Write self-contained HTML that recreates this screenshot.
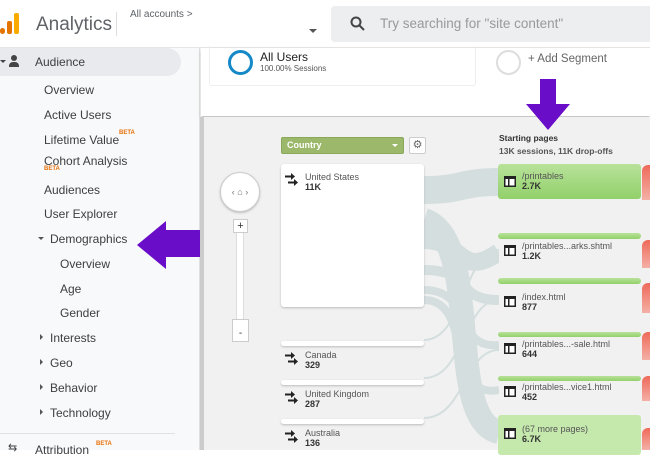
<!DOCTYPE html>
<html><head><meta charset="utf-8"><style>
*{margin:0;padding:0;box-sizing:border-box}
body{width:650px;height:450px;overflow:hidden;font-family:"Liberation Sans",Arial,sans-serif;background:#fff;position:relative}
.a{position:absolute}
.side{left:0;top:48px;width:200px;height:402px;background:#f8f9fa;border-right:1px solid #e0e0e0}
.si{position:absolute;font-size:12px;color:#3c4043;white-space:nowrap}
.beta{position:absolute;font-size:6px;color:#e8710a;font-weight:bold}
.flow{left:201px;top:117px;width:449px;height:333px;background:#f1f1f1}
.cb{position:absolute;left:281px;width:143px;background:#fff;border-radius:3px;box-shadow:0 1px 2px #bbb}
.ct{position:absolute;font-size:9px;color:#555;white-space:nowrap}
.ct b{display:block;color:#333;font-size:9px}
.gn{position:absolute;left:498px;width:143px;background:linear-gradient(#b8e29a,#92d06a);border-radius:3px}
.rd{position:absolute;left:642px;width:10px;background:linear-gradient(#ee6a5a,#f4b0a6);border-radius:6px 0 0 0}
</style></head><body>
<svg width="0" height="0" style="position:absolute"><defs>
<symbol id="pg" viewBox="0 0 12 11"><rect x="0" y="0" width="12" height="11" fill="#222"/><rect x="1.5" y="3" width="2.5" height="6.5" fill="#fff"/><rect x="5.5" y="3" width="5" height="6.5" fill="#fff"/><rect x="1.5" y="3" width="9" height="0.01" fill="#fff"/></symbol>
<symbol id="ar" viewBox="0 0 14 14"><path d="M0 3.5H6V1L10 4.5L6 8V5.5H0Z" fill="#222"/><path d="M3 9.5H9V7L13 10.5L9 14V11.5H3Z" fill="#222"/></symbol>
</defs></svg>
<!-- header -->
<div class="a" style="left:0;top:0;width:650px;height:48px;background:#fff;border-bottom:1px solid #e6e6e6;box-shadow:0 1px 2px #eee"></div>
<div class="a" style="left:0;top:28px;width:5px;height:6px;background:#e37400;border-radius:3px"></div>
<div class="a" style="left:7px;top:21px;width:5px;height:13px;background:#e37400;border-radius:2px"></div>
<div class="a" style="left:14px;top:13px;width:5px;height:21px;background:#f9ab00;border-radius:2px"></div>
<div class="a" style="left:36px;top:14px;font-size:19px;color:#5f6368">Analytics</div>
<div class="a" style="left:116px;top:12px;width:1px;height:24px;background:#ddd"></div>
<div class="a" style="left:130px;top:9px;font-size:10px;color:#5f6368">All accounts &gt;</div>
<div class="a" style="left:309px;top:29px;border-left:4px solid transparent;border-right:4px solid transparent;border-top:4px solid #555"></div>
<div class="a" style="left:331px;top:6px;width:325px;height:36px;background:#eceef0;border-radius:4px"></div>
<svg class="a" style="left:350px;top:16px" width="16" height="16"><circle cx="6" cy="6" r="4.5" fill="none" stroke="#444" stroke-width="2"/><path d="M9.5 9.5L14 14" stroke="#444" stroke-width="2"/></svg>
<div class="a" style="left:380px;top:16px;font-size:13.5px;color:#999">Try searching for "site content"</div>
<!-- sidebar -->
<div class="a side"></div>
<div class="a" style="left:0;top:48px;width:181px;height:28px;background:#e8eaed;border-radius:0 14px 14px 0"></div>
<div class="a" style="left:0;top:60px;border-left:3px solid transparent;border-right:3px solid transparent;border-top:3px solid #444"></div>
<div class="a" style="left:11px;top:55px;width:6px;height:6px;background:#444;border-radius:50%"></div>
<div class="a" style="left:9px;top:62px;width:10px;height:5px;background:#444;border-radius:4px 4px 0 0"></div>
<div class="si" style="left:35px;top:55px">Audience</div>
<div class="si" style="left:44px;top:83px">Overview</div>
<div class="si" style="left:44px;top:108px">Active Users</div>
<div class="si" style="left:44px;top:133px">Lifetime Value</div><div class="beta" style="left:119px;top:130px">BETA</div>
<div class="si" style="left:44px;top:154px">Cohort Analysis</div><div class="beta" style="left:44px;top:166px">BETA</div>
<div class="si" style="left:44px;top:183px">Audiences</div>
<div class="si" style="left:44px;top:207px">User Explorer</div>
<div class="a" style="left:38px;top:237px;border-left:3px solid transparent;border-right:3px solid transparent;border-top:3px solid #555"></div>
<div class="si" style="left:50px;top:232px">Demographics</div>
<div class="si" style="left:60px;top:257px">Overview</div>
<div class="si" style="left:60px;top:282px">Age</div>
<div class="si" style="left:60px;top:306px">Gender</div>
<div class="a" style="left:40px;top:334px;border-top:3px solid transparent;border-bottom:3px solid transparent;border-left:3px solid #555"></div><div class="si" style="left:50px;top:331px">Interests</div>
<div class="a" style="left:40px;top:359px;border-top:3px solid transparent;border-bottom:3px solid transparent;border-left:3px solid #555"></div><div class="si" style="left:50px;top:356px">Geo</div>
<div class="a" style="left:40px;top:384px;border-top:3px solid transparent;border-bottom:3px solid transparent;border-left:3px solid #555"></div><div class="si" style="left:50px;top:381px">Behavior</div>
<div class="a" style="left:40px;top:409px;border-top:3px solid transparent;border-bottom:3px solid transparent;border-left:3px solid #555"></div><div class="si" style="left:50px;top:406px">Technology</div>
<div class="a" style="left:0;top:433px;width:175px;height:1px;background:#e0e0e0"></div>
<div class="si" style="left:8px;top:441px;font-size:11px">⇆</div>
<div class="si" style="left:35px;top:443px">Attribution</div><div class="beta" style="left:96px;top:441px">BETA</div>
<!-- segments -->
<div class="a" style="left:201px;top:48px;width:449px;height:68px;background:#fff;box-shadow:0 2px 3px #bbb"></div>
<div class="a" style="left:209px;top:46px;width:267px;height:40px;border:1px solid #eee;border-top:none;border-radius:0 0 3px 3px"></div>
<div class="a" style="left:228px;top:50px;width:25px;height:25px;border:3.5px solid #1589c8;border-radius:50%"></div>
<div class="a" style="left:260px;top:50px;font-size:12px;color:#222">All Users</div>
<div class="a" style="left:260px;top:64px;font-size:8px;color:#555">100.00% Sessions</div>
<div class="a" style="left:496px;top:50px;width:25px;height:25px;border:2px solid #ddd;border-radius:50%"></div>
<div class="a" style="left:528px;top:53px;font-size:11.5px;color:#666">+ Add Segment</div>
<!-- flow -->
<div class="a flow"></div>
<div class="a" style="left:200px;top:117px;width:4px;height:333px;background:#ccc"></div>
<svg class="a" style="left:424px;top:160px" width="75" height="290">
<g fill="none" stroke="#d3dddd" opacity=".95">
<path d="M0 30 C40 30 35 22 75 22" stroke-width="28"/>
<path d="M0 80 C40 80 35 120 75 92" stroke-width="18"/>
<path d="M0 110 C50 110 30 140 75 140" stroke-width="10"/>
<path d="M0 130 C50 130 30 190 75 185" stroke-width="8"/>
<path d="M0 140 C50 140 20 240 75 230" stroke-width="8"/>
<path d="M0 60 C60 80 20 260 75 272" stroke-width="24"/>
<path d="M0 180 C40 180 40 90 75 90" stroke-width="2"/>
<path d="M0 218 C40 218 40 140 75 140" stroke-width="2"/>
<path d="M0 258 C40 258 40 190 75 190" stroke-width="2"/>
</g></svg>
<div class="a" style="left:281px;top:137px;width:123px;height:17px;background:#9bb86b;border:1px solid #8aa85a;border-radius:2px;color:#fff;font-size:9px;font-weight:bold;padding:2px 5px">Country</div>
<div class="a" style="left:392px;top:144px;border-left:3px solid transparent;border-right:3px solid transparent;border-top:3px solid #fff"></div>
<div class="a" style="left:409px;top:137px;width:17px;height:17px;background:#fff;border:1px solid #ccc;border-radius:2px;font-size:11px;color:#666;text-align:center;line-height:15px">⚙</div>
<div class="a" style="left:220px;top:172px;width:40px;height:40px;background:#fff;border:1px solid #ccc;border-radius:50%;box-shadow:0 1px 2px #bbb;font-size:9px;color:#777;text-align:center;line-height:38px">‹ ⌂ ›</div>
<div class="a" style="left:236px;top:230px;width:8px;height:100px;background:#fff;border:1px solid #ddd"></div>
<div class="a" style="left:233px;top:219px;width:15px;height:14px;background:#fff;border:1px solid #ccc;font-size:11px;text-align:center;line-height:12px;color:#333">+</div>
<div class="a" style="left:232px;top:319px;width:17px;height:23px;background:#fff;border:1px solid #ccc;font-size:10px;text-align:center;line-height:28px;color:#333">-</div>
<div class="cb" style="top:164px;height:143px"></div>
<svg class="a" style="left:285px;top:172px" width="14" height="14"><use href="#ar"/></svg><div class="ct" style="left:305px;top:172px">United States<b>11K</b></div>
<div class="cb" style="top:341px;height:5px"></div>
<svg class="a" style="left:285px;top:351px" width="14" height="14"><use href="#ar"/></svg><div class="ct" style="left:305px;top:350px">Canada<b>329</b></div>
<div class="cb" style="top:380px;height:5px"></div>
<svg class="a" style="left:285px;top:390px" width="14" height="14"><use href="#ar"/></svg><div class="ct" style="left:305px;top:389px">United Kingdom<b>287</b></div>
<div class="cb" style="top:419px;height:5px"></div>
<svg class="a" style="left:285px;top:429px" width="14" height="14"><use href="#ar"/></svg><div class="ct" style="left:305px;top:428px">Australia<b>136</b></div>
<div class="a" style="left:499px;top:133px;font-size:8.5px;font-weight:bold;color:#333">Starting pages</div>
<div class="a" style="left:499px;top:146px;font-size:8.5px;font-weight:bold;color:#555">13K sessions, 11K drop-offs</div>
<div class="gn" style="top:164px;height:35px"></div>
<div class="gn" style="top:233px;height:6px"></div>
<div class="gn" style="top:278px;height:6px"></div>
<div class="gn" style="top:332px;height:5px"></div>
<div class="gn" style="top:376px;height:5px"></div>
<div class="gn" style="top:415px;height:40px;background:#c5e8ad"></div>
<svg class="a" style="left:504px;top:176px" width="12" height="11"><use href="#pg"/></svg><div class="ct" style="left:522px;top:171px">/printables<b>2.7K</b></div>
<svg class="a" style="left:504px;top:245px" width="12" height="11"><use href="#pg"/></svg><div class="ct" style="left:522px;top:241px">/printables...arks.shtml<b>1.2K</b></div>
<svg class="a" style="left:504px;top:296px" width="12" height="11"><use href="#pg"/></svg><div class="ct" style="left:522px;top:292px">/index.html<b>877</b></div>
<svg class="a" style="left:504px;top:343px" width="12" height="11"><use href="#pg"/></svg><div class="ct" style="left:522px;top:339px">/printables...-sale.html<b>644</b></div>
<svg class="a" style="left:504px;top:386px" width="12" height="11"><use href="#pg"/></svg><div class="ct" style="left:522px;top:382px">/printables...vice1.html<b>452</b></div>
<svg class="a" style="left:504px;top:428px" width="12" height="11"><use href="#pg"/></svg><div class="ct" style="left:522px;top:424px">(67 more pages)<b>6.7K</b></div>
<div class="rd" style="top:165px;height:35px"></div>
<div class="rd" style="top:240px;height:28px"></div>
<div class="rd" style="top:283px;height:30px"></div>
<div class="rd" style="top:332px;height:28px"></div>
<div class="rd" style="top:376px;height:25px"></div>
<div class="rd" style="top:428px;height:22px"></div>
<!-- purple arrows -->
<svg class="a" style="left:0;top:0" width="650" height="450">
<path d="M540 79H556V104H570L548 130L526 104H540Z" fill="#6a0dc9"/>
<path d="M200 230H166V221L137 245L166 269V257H200Z" fill="#6a0dc9"/>
</svg>
</body></html>
